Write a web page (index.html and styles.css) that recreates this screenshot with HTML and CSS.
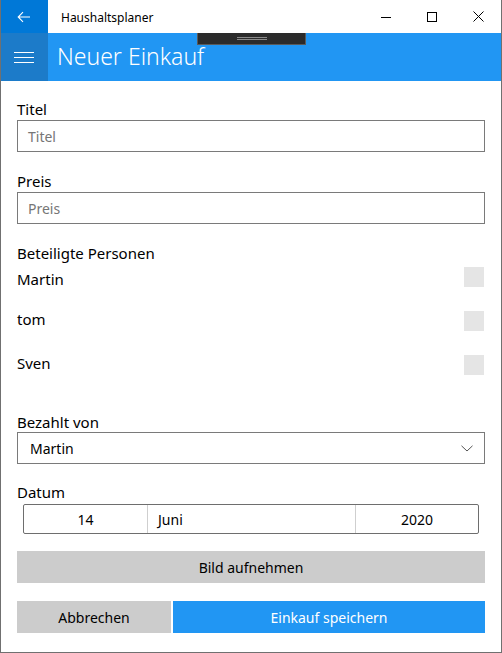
FILE: index.html
```html
<!DOCTYPE html>
<html lang="de">
<head>
<meta charset="utf-8">
<title>Haushaltsplaner</title>
<link rel="stylesheet" href="styles.css">
</head>
<body>
<div class="window">
  <div class="titlebar">
    <div class="back-btn">
      <svg width="14" height="12" viewBox="0 0 14 12"><path d="M13 6H1.5M6 1.2L1.2 6 6 10.8" fill="none" stroke="#fff" stroke-width="1.1"/></svg>
    </div>
    <div class="app-title">Haushaltsplaner</div>
    <div class="caption">
      <div class="cap-btn"><svg width="10" height="10" viewBox="0 0 10 10"><path d="M0 5.5H10" stroke="#000" stroke-width="1"/></svg></div>
      <div class="cap-btn"><svg width="10" height="10" viewBox="0 0 10 10"><rect x="0.5" y="0.5" width="9" height="9" fill="none" stroke="#000" stroke-width="1"/></svg></div>
      <div class="cap-btn"><svg width="11" height="11" viewBox="0 0 11 11"><path d="M0.5 0.5L10.5 10.5M10.5 0.5L0.5 10.5" stroke="#000" stroke-width="1"/></svg></div>
    </div>
  </div>
  <div class="header">
    <div class="menu-btn">
      <span class="bar"></span><span class="bar"></span><span class="bar"></span>
    </div>
    <div class="page-title">Neuer Einkauf</div>
    <div class="drag-handle"><span class="grip"></span><span class="grip"></span></div>
  </div>
  <div class="content">
    <div class="label label-first">Titel</div>
    <div class="input"><span class="placeholder">Titel</span></div>
    <div class="label">Preis</div>
    <div class="input"><span class="placeholder">Preis</span></div>
    <div class="label">Beteiligte Personen</div>
    <div class="persons">
      <div class="person person-first"><span class="person-name">Martin</span><span class="check"></span></div>
      <div class="person"><span class="person-name">tom</span><span class="check"></span></div>
      <div class="person"><span class="person-name">Sven</span><span class="check"></span></div>
    </div>
    <div class="label label-paid">Bezahlt von</div>
    <div class="combo">
      <span class="combo-value">Martin</span>
      <svg width="12" height="7" viewBox="0 0 12 7"><path d="M0.5 0.8L6 6 11.5 0.8" fill="none" stroke="#555" stroke-width="1"/></svg>
    </div>
    <div class="label label-date">Datum</div>
    <div class="datepicker">
      <div class="dp-day">14</div>
      <div class="dp-month">Juni</div>
      <div class="dp-year">2020</div>
    </div>
    <div class="btn btn-photo">Bild aufnehmen</div>
    <div class="actions">
      <div class="btn btn-cancel">Abbrechen</div>
      <div class="btn btn-save">Einkauf speichern</div>
    </div>
  </div>
</div>
</body>
</html>
```
FILE: styles.css
```css
* { box-sizing: border-box; }
html, body { margin: 0; padding: 0; background: #fff; }
body {
  font-family: "Noto Sans", "Open Sans", sans-serif;
  color: #000;
}
.window {
  width: 502px;
  height: 653px;
  border: 1px solid #707070;
  border-top: none;
  display: flex;
  flex-direction: column;
  overflow: hidden;
}
.titlebar {
  height: 33px;
  display: flex;
  align-items: center;
  background: #fff;
}
.back-btn {
  width: 48px;
  height: 33px;
  background: #0078d7;
  display: flex;
  align-items: center;
  justify-content: center;
  margin-left: -1px;
}
.app-title {
  font-size: 12px;
  margin-left: 13px;
  flex: 1;
  padding-top: 1px;
}
.caption { display: flex; height: 33px; }
.cap-btn {
  width: 46px;
  height: 33px;
  display: flex;
  align-items: center;
  justify-content: center;
}
.header {
  position: relative;
  height: 48px;
  background: #2196f3;
  display: flex;
  align-items: center;
}
.menu-btn {
  width: 48px;
  height: 48px;
  margin-left: -1px;
  background: #1c7bc9;
  display: flex;
  flex-direction: column;
  justify-content: center;
  align-items: center;
  gap: 4px;
}
.bar {
  display: block;
  width: 20px;
  height: 1px;
  background: #fff;
}
.page-title {
  color: #fff;
  font-size: 23px;
  font-weight: 300;
  margin-left: 9px;
  padding-bottom: 2px;
}
.drag-handle {
  position: absolute;
  left: 196px;
  top: 0;
  width: 109px;
  height: 12px;
  background: #2b2b2b;
  border: 1px solid #5a5a5a;
  border-top: none;
  display: flex;
  flex-direction: column;
  align-items: center;
  justify-content: center;
  gap: 1px;
}
.grip {
  display: block;
  width: 30px;
  height: 1px;
  background: #8a8a8a;
}
.content {
  flex: 1;
  padding: 18px 16px 0 16px;
  display: flex;
  flex-direction: column;
}
.label {
  font-size: 15px;
  line-height: 20px;
  margin-top: 19px;
  margin-bottom: 1px;
}
.label-first { margin-top: 0; }
.label-paid { margin-top: 15px; margin-bottom: 0; }
.label-date { margin-top: 18px; margin-bottom: 2px; }
.input {
  height: 32px;
  border: 1px solid #7a7a7a;
  display: flex;
  align-items: center;
  padding: 1px 10px 0;
}
.placeholder {
  font-size: 14px;
  color: #767676;
}
.persons {
  display: flex;
  flex-direction: column;
  margin-top: 1px;
}
.person {
  height: 44px;
  display: flex;
  justify-content: space-between;
  align-items: flex-start;
}
.person-name {
  font-size: 15px;
  line-height: 20px;
  padding-top: 0;
}
.person-first .person-name { padding-top: 4px; }
.check {
  width: 20px;
  height: 20px;
  margin-top: 2px;
  margin-right: 1px;
  background: #e5e5e5;
}
.combo {
  height: 32px;
  border: 1px solid #7a7a7a;
  display: flex;
  align-items: center;
  justify-content: space-between;
  padding: 1px 11px 0 12px;
}
.combo-value { font-size: 14px; }
.datepicker {
  height: 30px;
  margin: 0 6px 0 6px;
  border: 1px solid #6e6e6e;
  border-radius: 2px;
  display: flex;
  font-size: 14px;
}
.dp-day, .dp-month, .dp-year {
  display: flex;
  align-items: center;
  padding-top: 1px;
}
.dp-day { width: 124px; justify-content: center; border-right: 1px solid #cfcfcf; }
.dp-month { flex: 1; padding-left: 10px; border-right: 1px solid #cfcfcf; }
.dp-year { width: 122px; justify-content: center; }
.btn {
  height: 32px;
  display: flex;
  align-items: center;
  justify-content: center;
  font-size: 14px;
  padding-top: 1px;
}
.btn-photo {
  margin-top: 17px;
  background: #cccccc;
}
.actions {
  display: flex;
  gap: 2px;
  margin-top: 18px;
}
.btn-cancel { width: 154px; background: #cccccc; }
.btn-save { flex: 1; background: #2196f3; color: #fff; }
```
